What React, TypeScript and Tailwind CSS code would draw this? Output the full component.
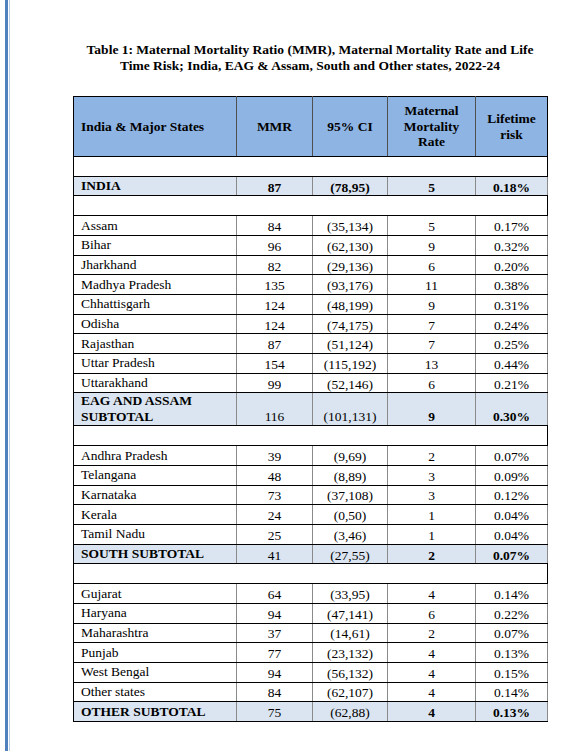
type Kind = "blank" | "total" | "sub" | "data";

interface Row {
  kind: Kind;
  name?: string;
  mmr?: string;
  ci?: string;
  rate?: string;
  risk?: string;
}

const rows: Row[] = [
  { kind: "blank" },
  { kind: "total", name: "INDIA", mmr: "87", ci: "(78,95)", rate: "5", risk: "0.18%" },
  { kind: "blank" },
  { kind: "data", name: "Assam", mmr: "84", ci: "(35,134)", rate: "5", risk: "0.17%" },
  { kind: "data", name: "Bihar", mmr: "96", ci: "(62,130)", rate: "9", risk: "0.32%" },
  { kind: "data", name: "Jharkhand", mmr: "82", ci: "(29,136)", rate: "6", risk: "0.20%" },
  { kind: "data", name: "Madhya Pradesh", mmr: "135", ci: "(93,176)", rate: "11", risk: "0.38%" },
  { kind: "data", name: "Chhattisgarh", mmr: "124", ci: "(48,199)", rate: "9", risk: "0.31%" },
  { kind: "data", name: "Odisha", mmr: "124", ci: "(74,175)", rate: "7", risk: "0.24%" },
  { kind: "data", name: "Rajasthan", mmr: "87", ci: "(51,124)", rate: "7", risk: "0.25%" },
  { kind: "data", name: "Uttar Pradesh", mmr: "154", ci: "(115,192)", rate: "13", risk: "0.44%" },
  { kind: "data", name: "Uttarakhand", mmr: "99", ci: "(52,146)", rate: "6", risk: "0.21%" },
  { kind: "sub", name: "EAG AND ASSAM SUBTOTAL", mmr: "116", ci: "(101,131)", rate: "9", risk: "0.30%" },
  { kind: "blank" },
  { kind: "data", name: "Andhra Pradesh", mmr: "39", ci: "(9,69)", rate: "2", risk: "0.07%" },
  { kind: "data", name: "Telangana", mmr: "48", ci: "(8,89)", rate: "3", risk: "0.09%" },
  { kind: "data", name: "Karnataka", mmr: "73", ci: "(37,108)", rate: "3", risk: "0.12%" },
  { kind: "data", name: "Kerala", mmr: "24", ci: "(0,50)", rate: "1", risk: "0.04%" },
  { kind: "data", name: "Tamil Nadu", mmr: "25", ci: "(3,46)", rate: "1", risk: "0.04%" },
  { kind: "sub", name: "SOUTH SUBTOTAL", mmr: "41", ci: "(27,55)", rate: "2", risk: "0.07%" },
  { kind: "blank" },
  { kind: "data", name: "Gujarat", mmr: "64", ci: "(33,95)", rate: "4", risk: "0.14%" },
  { kind: "data", name: "Haryana", mmr: "94", ci: "(47,141)", rate: "6", risk: "0.22%" },
  { kind: "data", name: "Maharashtra", mmr: "37", ci: "(14,61)", rate: "2", risk: "0.07%" },
  { kind: "data", name: "Punjab", mmr: "77", ci: "(23,132)", rate: "4", risk: "0.13%" },
  { kind: "data", name: "West Bengal", mmr: "94", ci: "(56,132)", rate: "4", risk: "0.15%" },
  { kind: "data", name: "Other states", mmr: "84", ci: "(62,107)", rate: "4", risk: "0.14%" },
  { kind: "sub", name: "OTHER SUBTOTAL", mmr: "75", ci: "(62,88)", rate: "4", risk: "0.13%" },
];

function TableRow({ row }: { row: Row }) {
  if (row.kind === "blank") {
    return (
      <tr className="h-[19.8px]">
        <td colSpan={5} className="border-y border-black p-0" />
      </tr>
    );
  }
  const shaded = row.kind !== "data";
  const bg = shaded ? "bg-[#dbe5f1]" : "";
  const allBold = row.kind === "total";
  const twoLine = row.name === "EAG AND ASSAM SUBTOTAL";
  const cell = `border-y border-black border-x border-x-[#8a8a8a] p-0 pt-[2px] text-center ${twoLine ? "align-bottom pb-[1px]" : "align-middle"} ${bg}`;
  return (
    <tr className={twoLine ? "h-[32px]" : "h-[19.7px]"}>
      <td
        className={`border-y border-black border-r border-r-[#8a8a8a] p-0 pl-[7px] text-left align-middle leading-[16px] ${bg} ${shaded ? "font-bold" : ""}`}
      >
        {twoLine ? (
          <>
            EAG AND ASSAM
            <br />
            SUBTOTAL
          </>
        ) : (
          row.name
        )}
      </td>
      <td className={`${cell} ${allBold ? "font-bold" : ""}`}>{row.mmr}</td>
      <td className={`${cell} ${allBold ? "font-bold" : ""}`}>{row.ci}</td>
      <td className={`${cell} ${shaded ? "font-bold" : ""}`}>{row.rate}</td>
      <td className={`${cell} ${shaded ? "font-bold" : ""}`}>{row.risk}</td>
    </tr>
  );
}

export default function App() {
  return (
    <div className="flex h-[751px] w-[588px] bg-white font-['Liberation_Serif','Times_New_Roman',serif] text-black">
      {/* page edge */}
      <div className="ml-[5px] w-[3px] bg-[#4f81bd]" />
      <div className="ml-[1px] w-[1px] bg-[#b9cde5]" />

      <div className="ml-[63px] w-[474px]">
        <h1 className="mt-[42px] text-center text-[13.5px] font-bold leading-[16px]">
          Table 1: Maternal Mortality Ratio (MMR), Maternal Mortality Rate and Life
          <br />
          Time Risk; India, EAG &amp; Assam, South and Other states, 2022-24
        </h1>

        <table className="mt-[22px] w-[474px] table-fixed border-collapse border-[1.5px] border-black text-[13.5px] leading-[15px]">
          <colgroup>
            <col className="w-[163px]" />
            <col className="w-[76px]" />
            <col className="w-[75px]" />
            <col className="w-[88px]" />
            <col className="w-[72px]" />
          </colgroup>
          <thead>
            <tr className="h-[60px] bg-[#8eb4e3] font-bold">
              <th className="border-b border-black border-r border-r-[#505050] p-0 pl-[7px] text-left font-bold">
                India &amp; Major States
              </th>
              <th className="border-b border-black border-r border-r-[#505050] p-0 font-bold">MMR</th>
              <th className="border-b border-black border-r border-r-[#505050] p-0 font-bold">95% CI</th>
              <th className="border-b border-black border-r border-r-[#505050] p-0 font-bold leading-[15.5px]">
                Maternal
                <br />
                Mortality
                <br />
                Rate
              </th>
              <th className="border-b border-black p-0 font-bold leading-[16px]">
                Lifetime
                <br />
                risk
              </th>
            </tr>
          </thead>
          <tbody>
            {rows.map((row, i) => (
              <TableRow key={i} row={row} />
            ))}
          </tbody>
        </table>
      </div>
    </div>
  );
}
